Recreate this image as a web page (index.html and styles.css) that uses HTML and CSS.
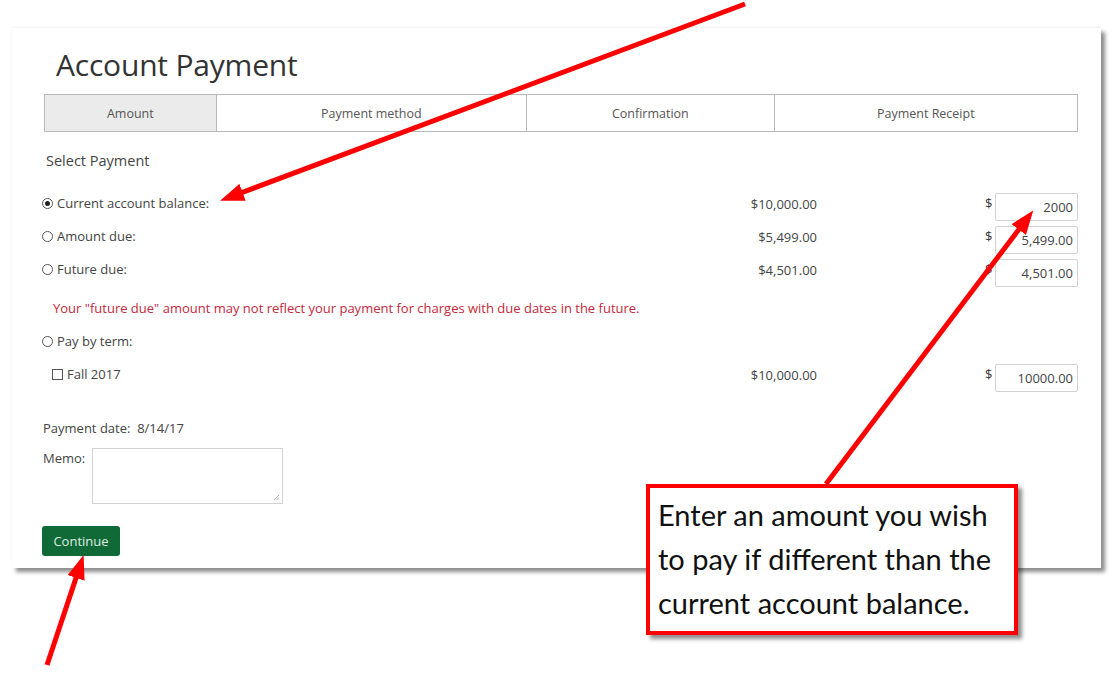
FILE: index.html
```html
<!DOCTYPE html>
<html>
<head>
<meta charset="utf-8">
<title>Account Payment</title>
<link rel="stylesheet" href="styles.css">
</head>
<body>
<div class="canvas">
  <div class="panel">
    <h1 class="title">Account Payment</h1>
    <div class="tabs">
      <div class="tab active">Amount</div>
      <div class="tab">Payment method</div>
      <div class="tab">Confirmation</div>
      <div class="tab">Payment Receipt</div>
    </div>
    <div class="section-title">Select Payment</div>
    <div class="rows">
      <div class="row">
        <div class="opt"><span class="radio on"></span>Current account balance:</div>
        <div class="amt">$10,000.00</div>
        <div></div>
        <div class="cur"><span class="dollar">$</span><span class="input">2000</span></div>
      </div>
      <div class="row">
        <div class="opt"><span class="radio"></span>Amount due:</div>
        <div class="amt">$5,499.00</div>
        <div></div>
        <div class="cur"><span class="dollar">$</span><span class="input">5,499.00</span></div>
      </div>
      <div class="row">
        <div class="opt"><span class="radio"></span>Future due:</div>
        <div class="amt">$4,501.00</div>
        <div></div>
        <div class="cur"><span class="dollar">$</span><span class="input">4,501.00</span></div>
      </div>
      <p class="warning">Your "future due" amount may not reflect your payment for charges with due dates in the future.</p>
      <div class="opt term"><span class="radio"></span>Pay by term:</div>
      <div class="row term-row">
        <div class="opt sub"><span class="check"></span>Fall 2017</div>
        <div class="amt">$10,000.00</div>
        <div></div>
        <div class="cur"><span class="dollar">$</span><span class="input">10000.00</span></div>
      </div>
      <div class="pay-date">Payment date:&nbsp; 8/14/17</div>
      <div class="memo">
        <span class="memo-label">Memo:</span>
        <span class="textarea"><svg class="grip" width="7" height="7" viewBox="0 0 7 7"><path d="M6 1 L1 6 M6 3.5 L3.5 6 M6 5.5 L5.5 6" stroke="#999" stroke-width="0.8"/></svg></span>
      </div>
      <div class="btn">Continue</div>
    </div>
  </div>

  <div class="callout">Enter an amount you wish to pay if different than the current account balance.</div>

  <svg class="arrows" width="1116" height="679" viewBox="0 0 1116 679">
    <defs>
      <marker id="head" markerUnits="userSpaceOnUse" markerWidth="24" markerHeight="18" refX="10" refY="9" orient="auto">
        <path d="M0,0 L24,9 L0,18 z" fill="#ff0000"/>
      </marker>
    </defs>
    <line x1="745" y1="4" x2="233.2" y2="195.8" stroke="#ff0000" stroke-width="5" marker-end="url(#head)"/>
    <line x1="826" y1="484" x2="1024.8" y2="221.6" stroke="#ff0000" stroke-width="5" marker-end="url(#head)"/>
    <line x1="47" y1="665" x2="79.2" y2="568.4" stroke="#ff0000" stroke-width="5" marker-end="url(#head)"/>
  </svg>
</div>
</body>
</html>
```

FILE: styles.css
```css
* { box-sizing: border-box; }
html, body { margin: 0; padding: 0; background: #fff; }
body { font-family: "Open Sans", "Noto Sans", sans-serif; color: #444; }

.canvas {
  position: relative;
  width: 1116px;
  height: 679px;
  padding: 28px 15px 0 12px;
  overflow: hidden;
}

.panel {
  width: 1089px;
  height: 540px;
  background: #fff;
  box-shadow: 4px 4px 4px rgba(0,0,0,0.45), 0 -1px 2px rgba(0,0,0,0.06);
  padding: 19px 23px 0 32px;
}

.title {
  margin: 0 0 11px 12px;
  font-weight: 400;
  font-size: 30px;
  line-height: 36px;
  color: #333;
  letter-spacing: -0.2px;
}

.tabs {
  display: grid;
  grid-template-columns: 171fr 311fr 248fr 304fr;
  height: 38px;
  border: 1px solid #b9b9b9;
}
.tab {
  display: flex;
  align-items: center;
  justify-content: center;
  font-size: 12.5px;
  color: #555;
  border-left: 1px solid #b9b9b9;
}
.tab:first-child { border-left: none; }
.tab.active { background: #ebebeb; }

.section-title {
  margin: 19px 0 0 2px;
  font-size: 14.5px;
  line-height: 20px;
  color: #444;
}

.rows { margin: 22px 0 0 -2px; }

.row {
  display: grid;
  grid-template-columns: 1fr 120px 168px 93px;
  height: 28px;
  margin-bottom: 5px;
  font-size: 13px;
  line-height: 20px;
}
.opt {
  display: flex;
  align-items: center;
  font-size: 13px;
  line-height: 20px;
  height: 20px;
  color: #444;
}
.amt { text-align: right; padding-top: 1px; color: #444; }
.cur { display: flex; align-items: flex-start; }
.dollar { width: 10px; line-height: 20px; color: #333; }
.input {
  flex: 1;
  height: 28px;
  border: 1px solid #d2d2d2;
  border-radius: 2px;
  text-align: right;
  padding: 0 4px;
  line-height: 27px;
  color: #444;
}

.radio {
  width: 11px;
  height: 11px;
  border: 1px solid #555;
  border-radius: 50%;
  margin-right: 4px;
  display: inline-flex;
  align-items: center;
  justify-content: center;
}
.radio.on::after {
  content: "";
  width: 5px;
  height: 5px;
  border-radius: 50%;
  background: #222;
}
.check {
  width: 11px;
  height: 11px;
  border: 1px solid #555;
  margin-right: 4px;
}

.warning {
  margin: 11px 0 0 11px;
  font-size: 13px;
  line-height: 20px;
  color: #c4283c;
}
.term { margin-top: 13px; }
.term-row { margin-top: 13px; }
.sub { padding-left: 10px; }

.pay-date {
  margin: 26px 0 0 1px;
  font-size: 13px;
  line-height: 20px;
}
.memo {
  display: flex;
  margin: 10px 0 0 1px;
  font-size: 13px;
  line-height: 20px;
}
.memo-label { width: 49px; }
.textarea {
  position: relative;
  width: 191px;
  height: 56px;
  border: 1px solid #d2d2d2;
}
.grip { position: absolute; right: 2px; bottom: 2px; }

.btn {
  margin-top: 22px;
  width: 78px;
  height: 30px;
  background: #0f6a37;
  border-radius: 3px;
  color: #dfeee3;
  font-size: 13px;
  display: flex;
  align-items: center;
  justify-content: center;
}

.callout {
  position: absolute;
  left: 646px;
  top: 484px;
  width: 372px;
  height: 151px;
  border: 4px solid #ff0000;
  background: #fff;
  box-shadow: 4px 4px 4px rgba(0,0,0,0.45);
  padding: 5px 8px 0 8px;
  font-family: Lato, "Open Sans", sans-serif;
  font-size: 29px;
  line-height: 44px;
  color: #111;
}

.arrows {
  position: absolute;
  left: 0;
  top: 0;
  pointer-events: none;
}
```
